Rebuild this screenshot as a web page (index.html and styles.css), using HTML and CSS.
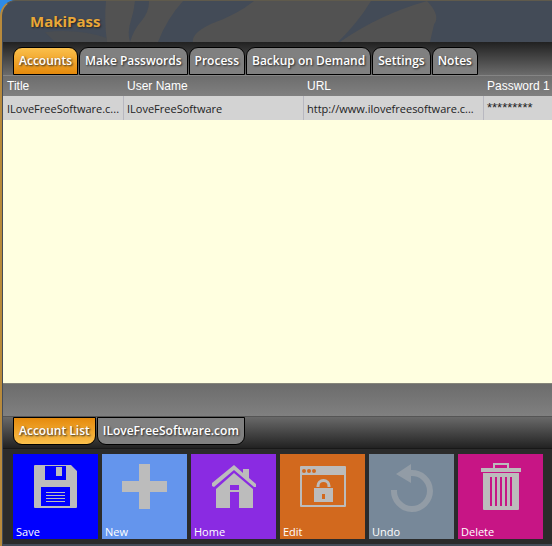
FILE: index.html
```html
<!DOCTYPE html>
<html lang="en">
<head>
<meta charset="utf-8">
<title>MakiPass</title>
<link rel="stylesheet" href="styles.css">
</head>
<body>
<div class="window">
  <header class="titlebar">
    <svg class="petals" viewBox="0 0 549 42" preserveAspectRatio="none" aria-hidden="true">
      <path d="M103 0H132Q131 10 128 20Q124 32 127 42H104Q101 20 103 0Z"/>
      <path d="M146 0H180Q164 18 155 42H127Q131 29 138 21Q146 12 146 0Z"/>
      <path d="M251 0H368Q355 22 335 42H190Q188 33 209 23Q234 14 251 0Z"/>
      <path d="M337 42Q376 14 424 0Q438 15 431 24L427 42Z"/>
      <path class="faint" d="M42 32Q75 28 104 38V42H52Z"/>
    </svg>
    <h1 class="brand">MakiPass</h1>
  </header>
  <nav class="tabs tabs-top">
    <button class="tab active" type="button">Accounts</button>
    <button class="tab" type="button">Make Passwords</button>
    <button class="tab" type="button">Process</button>
    <button class="tab" type="button">Backup on Demand</button>
    <button class="tab" type="button">Settings</button>
    <button class="tab" type="button">Notes</button>
  </nav>
  <main class="list">
    <table class="accounts">
      <colgroup><col class="c-title"><col class="c-wide"><col class="c-wide"><col></colgroup>
      <thead>
        <tr><th>Title</th><th>User Name</th><th>URL</th><th>Password 1</th></tr>
      </thead>
      <tbody>
        <tr><td>ILoveFreeSoftware.c...</td><td>ILoveFreeSoftware</td><td>http://www.ilovefreesoftware.c...</td><td class="masked">*********</td></tr>
      </tbody>
    </table>
  </main>
  <div class="strip"></div>
  <nav class="tabs tabs-bottom">
    <button class="tab active" type="button">Account List</button>
    <button class="tab" type="button">ILoveFreeSoftware.com</button>
  </nav>
  <footer class="tiles">
    <button class="tile save" type="button">
      <svg viewBox="0 0 85 85" aria-hidden="true"><path fill-rule="evenodd" d="M22 11H58L64 17V53Q64 54 63 54H22Q21 54 21 53V12Q21 11 22 11ZM32 12V26H53V12ZM28 33V52H57V33Z"/><path d="M43 13H49V22H43ZM33 38H52V39H33ZM33 41H52V42H33ZM33 44H52V45H33ZM33 47H52V48H33Z"/></svg>
      <span>Save</span>
    </button>
    <button class="tile new" type="button">
      <svg viewBox="0 0 85 85" aria-hidden="true"><path d="M37 10H48V27H65V38H48V55H37V38H20V27H37Z"/></svg>
      <span>New</span>
    </button>
    <button class="tile home" type="button">
      <svg viewBox="0 0 85 85" aria-hidden="true"><path d="M43 11L52 19V15H58V24L65 30V33L63 33L43 16L23 33L21 32V29Z"/><path fill-rule="evenodd" d="M43 19L62 35V54H48V31H39V54H25V35Z"/><path d="M39 36H48V38H39Z"/></svg>
      <span>Home</span>
    </button>
    <button class="tile edit" type="button">
      <svg viewBox="0 0 85 85" aria-hidden="true"><path fill-rule="evenodd" d="M21 12H65Q66 12 66 13V52Q66 53 65 53H21Q20 53 20 52V13Q20 12 21 12ZM22 21V51H64V21ZM24 15A2 2 0 0 0 24 19A2 2 0 0 0 24 15ZM29 15A2 2 0 0 0 29 19A2 2 0 0 0 29 15ZM34 15A2 2 0 0 0 34 19A2 2 0 0 0 34 15Z"/><path fill-rule="evenodd" d="M34 34H53V48H34ZM42 40V45H45V40Z"/><path class="line" d="M38 33V32A5.500 5.500 0 0 1 49 32V33"/></svg>
      <span>Edit</span>
    </button>
    <button class="tile undo" type="button">
      <svg viewBox="0 0 85 85" aria-hidden="true"><path d="M42 10V16A21 21 0 1 1 22 36H28A15 15 0 1 0 42 22V29L27 20Z"/></svg>
      <span>Undo</span>
    </button>
    <button class="tile delete" type="button">
      <svg viewBox="0 0 85 85" aria-hidden="true"><path fill-rule="evenodd" d="M35 9H51V14H63V18H23V14H35ZM37 11V14H49V11Z"/><path fill-rule="evenodd" d="M25 19H61V55Q61 56 60 56H26Q25 56 25 55ZM32 23V52H34V23ZM37 23V52H39V23ZM42 23V52H44V23ZM47 23V52H49V23ZM52 23V52H54V23Z"/></svg>
      <span>Delete</span>
    </button>
  </footer>
</div>
</body>
</html>
```

FILE: styles.css
```css
* { box-sizing: border-box; }

body {
  margin: 0;
  background: #2e8be6;
  font-family: "Open Sans", "Noto Sans", sans-serif;
  font-size: 12px;
}

button {
  margin: 0;
  border: 0;
  font: inherit;
  color: #fff;
  cursor: pointer;
}

.window {
  display: flex;
  flex-direction: column;
  min-height: 100vh;
  border-left: 2px solid #b88a3c;
  border-top: 1px solid #5f5a4c;
  border-top-left-radius: 16px;
  padding: 0 0 2px 1px;
  background: #434b57;
  overflow: hidden;
}

.titlebar {
  position: relative;
  height: 41px;
  padding: 9px 27px;
}

.petals {
  position: absolute;
  inset: 0;
  width: 100%;
  height: 100%;
  fill: #525252;
}

.petals .faint { fill: #4a4d51; }

.brand {
  position: relative;
  margin: 0;
  font-size: 15px;
  line-height: 22px;
  font-weight: 700;
  color: #e9a838;
  text-shadow: 1px 1px 2px #222;
}

.tabs {
  display: flex;
  gap: 1px;
  padding-left: 10px;
}

.tabs-top {
  height: 33px;
  align-items: flex-end;
  background: linear-gradient(#212121, #6b6b6b);
}

.tabs-bottom {
  height: 33px;
  align-items: flex-start;
  border-top: 1px solid #555;
  border-bottom: 1px solid #181818;
  background: linear-gradient(#696969, #222);
}

.tab {
  height: 28px;
  padding: 0 5px;
  border: 1px solid #000;
  background: #808080;
  font-weight: 600;
  line-height: 26px;
  white-space: nowrap;
  text-shadow: 1px 1px 2px #222;
}

.tabs-top .tab { border-radius: 9px 9px 0 0; }
.tabs-bottom .tab { border-radius: 0 0 9px 9px; }
.tabs-top .active { background: linear-gradient(#fbc04c, #e58a0c); }
.tabs-bottom .active { background: linear-gradient(#e58a0c, #fbc04c); }

.list {
  flex: 1;
  background: #ffffe0;
}

.accounts {
  width: 100%;
  table-layout: fixed;
  border-spacing: 0;
}

.c-title { width: 121px; }
.c-wide { width: 180px; }

.accounts th,
.accounts td {
  padding: 0 0 0 3px;
  text-align: left;
  white-space: nowrap;
}

.accounts th:first-child,
.accounts td:first-child { padding-left: 4px; }

.accounts thead { background: linear-gradient(#6c6c6c, #808080); }

.accounts th {
  height: 21px;
  border-top: 1px solid #858585;
  font: 12px/20px "Liberation Sans", sans-serif;
  color: #fff;
}

.accounts td {
  height: 24px;
  background: #d3d3d3;
  border-right: 1px solid #b8b8c0;
  font-size: 11px;
  color: #222;
}

.accounts td:last-child { border-right: 0; }

.accounts .masked { font: 13px/20px "Liberation Sans", sans-serif; }

.strip {
  height: 33px;
  border-top: 1px solid #85857a;
  background: linear-gradient(#6c6c6c, #808080);
}

.tiles {
  display: grid;
  grid-template-columns: repeat(6, 85px);
  gap: 4px;
  padding: 5px 10px;
  background: #2b2b2b;
}

.tile {
  display: grid;
  height: 85px;
  padding: 0;
  text-align: left;
}

.tile svg,
.tile span { grid-area: 1 / 1; }

.tile svg {
  width: 85px;
  height: 85px;
  fill: #bcbcbc;
}

.tile span {
  align-self: end;
  padding-left: 3px;
  font-size: 11px;
  line-height: 14px;
}

.tile .line {
  fill: none;
  stroke: #bcbcbc;
  stroke-width: 3px;
}

.save { background: #0000ff; }
.new { background: #6495ed; }
.home { background: #8a2be2; }
.edit { background: #d2691e; }
.undo { background: #778899; }
.undo svg { fill: #929ca6; }
.delete { background: #c71585; }
```
